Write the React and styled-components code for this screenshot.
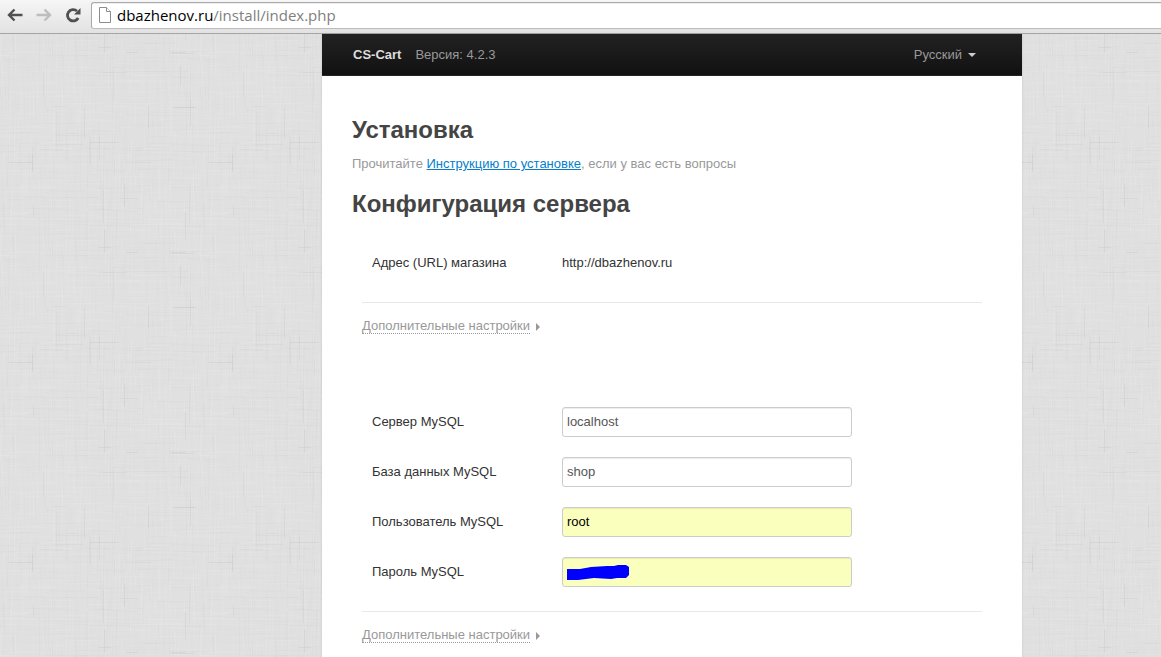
import React from "react";
import styled, { createGlobalStyle } from "styled-components";

// Woven linen tile: seeded so that the threads are the same on each load.
const TILE = 200;
function linenTile() {
  let seed = 42;
  const rnd = () => {
    seed = (seed * 1664525 + 1013904223) % 4294967296;
    return seed / 4294967296;
  };
  let out = "";
  // A thread that leaves the tile comes in again at the opposite edge.
  const thread = (across, x, y, len, fill, alpha) => {
    const size = across ? `width='${len}' height='1'` : `width='1' height='${len}'`;
    const paint = `${size} fill='${fill}' fill-opacity='${alpha.toFixed(3)}'`;
    out += `<rect x='${x}' y='${y}' ${paint}/>`;
    if ((across ? x : y) + len > TILE) {
      out += `<rect x='${across ? x - TILE : x}' y='${across ? y : y - TILE}' ${paint}/>`;
    }
  };
  const spot = () => Math.floor(rnd() * TILE);
  for (let i = 0; i < 1100; i += 1) {
    const light = rnd() < 0.5;
    const alpha = light ? 0.03 + rnd() * 0.05 : 0.002 + rnd() * 0.009;
    thread(rnd() < 0.5, spot(), spot(), 8 + Math.floor(rnd() * 40), light ? "white" : "black", alpha);
  }
  for (let i = 0; i < 36; i += 1) {
    thread(rnd() < 0.5, spot(), spot(), 12 + Math.floor(rnd() * 22), "black", 0.02 + rnd() * 0.025);
  }
  const svg = `<svg xmlns='http://www.w3.org/2000/svg' width='${TILE}' height='${TILE}'><rect width='${TILE}' height='${TILE}' fill='#e0e0e0'/>${out}</svg>`;
  return `url("data:image/svg+xml,${encodeURIComponent(svg).replace(/'/g, "%27")}")`;
}
const LINEN = linenTile();

const GlobalStyle = createGlobalStyle`
  *, *::before, *::after { box-sizing: border-box; }
  body {
    margin: 0;
    color: #333;
    font: 13px/20px "Liberation Sans", Arial, sans-serif;
  }
`;

const Window = styled.div`
  display: flex;
  flex-direction: column;
  min-height: 100vh;
`;

const Toolbar = styled.header`
  display: flex;
  height: 34px;
  padding: 2px 0 4px 6px;
  border-bottom: 1px solid #a5a5a5;
  background: linear-gradient(#f6f6f6, #e2e2e2);
`;

const ToolButton = styled.button`
  display: flex;
  align-items: center;
  justify-content: center;
  width: 29px;
  margin: 0;
  padding: 0 12px 2px 0;
  border: 0;
  background: none;
  color: ${(p) => (p.disabled ? "#bdbdbd" : "#505050")};
  svg { flex: none; }
`;

const AddressBar = styled.div`
  display: flex;
  flex: 1;
  align-items: center;
  gap: 6px;
  min-width: 0;
  margin-left: -2px;
  padding: 0 0 2px 7px;
  border: 1px solid #a9a9a9;
  border-right: 0;
  border-bottom-color: #bcbcbc;
  border-radius: 3px 0 0 3px;
  background: #fff;
  box-shadow: inset 0 1px #eee;
  color: #808080;
  font: 15px/22px "Open Sans", "Noto Sans", sans-serif;
  white-space: nowrap;
`;

const Host = styled.span`
  color: #000;
`;

const Desktop = styled.div`
  display: grid;
  flex: 1;
  grid-template-columns: minmax(0, 322fr) minmax(0, 700px) minmax(0, 139fr);
  background: #e2e2e2 ${LINEN} -28px 0;
`;

const Page = styled.div`
  grid-column: 2;
  background: #fff;
  box-shadow: 0 0 2px rgba(0, 0, 0, 0.12);
`;

const Navbar = styled.nav`
  display: flex;
  align-items: center;
  gap: 14px;
  height: 42px;
  padding: 0 46px 0 31px;
  border-bottom: 1px solid #252525;
  background: linear-gradient(#222, #111);
  color: #999;
`;

const Brand = styled.a`
  color: #ddd;
  font-weight: bold;
  text-decoration: none;
`;

const LanguageButton = styled.button`
  display: flex;
  align-items: center;
  gap: 6px;
  margin: 0 0 0 auto;
  padding: 0;
  border: 0;
  background: none;
  color: #999;
  font: inherit;
  &::after {
    content: "";
    border: 4px solid transparent;
    border-top-color: #ccc;
    border-bottom: 0;
  }
`;

const Content = styled.main`
  padding: 34px 40px 12px 30px;
`;

const Title = styled.h1`
  margin: 0;
  color: #444;
  font-size: 24px;
  line-height: 40px;
`;

const Hint = styled.p`
  margin: 4px 0 10px;
  color: #999;
`;

const HintLink = styled.a`
  color: #0780cc;
  text-decoration: underline;
`;

const Section = styled.section`
  display: flex;
  flex-direction: column;
  gap: 20px;
  margin-left: 10px;
  padding: ${(p) => p.$top}px 0 ${(p) => p.$bottom}px 10px;
`;

const Row = styled.div`
  display: grid;
  grid-template-columns: 190px minmax(0, 290px);
  align-items: center;
`;

const Field = styled.div`
  position: relative;
`;

const TextInput = styled.input`
  display: block;
  width: 100%;
  height: 30px;
  padding: 3px 4px 5px;
  border: 1px solid #ccc;
  border-radius: 3px;
  background: ${(p) => (p.$filled ? "#faffbd" : "#fff")};
  box-shadow: inset 0 1px 1px rgba(0, 0, 0, 0.075);
  color: ${(p) => (p.$filled ? "#000" : "#555")};
  font: inherit;
`;

const Scribble = styled.svg`
  position: absolute;
  top: 8px;
  left: 5px;
  pointer-events: none;
`;

const More = styled.div`
  margin-left: 10px;
  padding-top: 13px;
  border-top: 1px solid #e8e8e8;
`;

const MoreButton = styled.button`
  display: flex;
  align-items: center;
  gap: 6px;
  height: 20px;
  margin: 0;
  padding: 0;
  border: 0;
  background: none;
  color: #999;
  font: inherit;
  &::after {
    content: "";
    margin-top: 2px;
    border: 4px solid transparent;
    border-left-color: #999;
    border-right: 0;
  }
`;

const Dotted = styled.span`
  border-bottom: 1px dotted #999;
  line-height: 15px;
`;

const BackIcon = () => (
  <svg width="18" height="16" viewBox="0 0 18 16" fill="none" stroke="currentColor" strokeWidth="2.4" aria-hidden="true">
    <path d="M16.5 8H3M8.5 2.5 3 8l5.5 5.5" />
  </svg>
);

const ForwardIcon = () => (
  <svg width="18" height="16" viewBox="0 0 18 16" fill="none" stroke="currentColor" strokeWidth="2.4" aria-hidden="true">
    <path d="M1.5 8H15M9.5 2.5 15 8l-5.5 5.5" />
  </svg>
);

const ReloadIcon = () => (
  <svg width="16" height="16" viewBox="0 0 16 16" aria-hidden="true">
    <path d="M13.2 11A5.7 5.7 0 1 1 12 4" fill="none" stroke="currentColor" strokeWidth="2.8" />
    <path d="M15.5 1v6.5H9z" fill="currentColor" />
  </svg>
);

const PageIcon = () => (
  <svg width="12" height="16" viewBox="0 0 12 16" fill="#fff" stroke="#8c8c8c" aria-hidden="true">
    <path d="M.5.5h7l4 4v11H.5z" />
    <path d="M7.5.5v4h4" />
  </svg>
);

const FIELDS = [
  { id: "host", label: "Сервер MySQL", value: "localhost" },
  { id: "name", label: "База данных MySQL", value: "shop" },
  { id: "user", label: "Пользователь MySQL", value: "root", filled: true },
  { id: "password", label: "Пароль MySQL", value: "", type: "password", filled: true },
];

const MoreSettings = () => (
  <More>
    <MoreButton type="button" aria-expanded="false">
      <Dotted>Дополнительные настройки</Dotted>
    </MoreButton>
  </More>
);

export default function App() {
  return (
    <Window>
      <GlobalStyle />
      <Toolbar>
        <ToolButton type="button" aria-label="Назад"><BackIcon /></ToolButton>
        <ToolButton type="button" aria-label="Вперёд" disabled><ForwardIcon /></ToolButton>
        <ToolButton type="button" aria-label="Обновить"><ReloadIcon /></ToolButton>
        <AddressBar>
          <PageIcon />
          <div><Host>dbazhenov.ru</Host>/install/index.php</div>
        </AddressBar>
      </Toolbar>
      <Desktop>
        <Page>
          <Navbar>
            <Brand href="#">CS-Cart</Brand>
            <span>Версия: 4.2.3</span>
            <LanguageButton type="button" aria-haspopup="true">Русский</LanguageButton>
          </Navbar>
          <Content>
            <Title>Установка</Title>
            <Hint>
              Прочитайте <HintLink href="#">Инструкцию по установке</HintLink>, если у вас есть вопросы
            </Hint>
            <Title as="h2">Конфигурация сервера</Title>
            <Section $top={29} $bottom={29}>
              <Row>
                <span>Адрес (URL) магазина</span>
                <span>http://dbazhenov.ru</span>
              </Row>
            </Section>
            <MoreSettings />
            <Section $top={71} $bottom={24}>
              {FIELDS.map((f) => (
                <Row key={f.id}>
                  <label htmlFor={f.id}>{f.label}</label>
                  <Field>
                    <TextInput id={f.id} type={f.type || "text"} defaultValue={f.value} $filled={f.filled} />
                    {f.type === "password" && (
                      <Scribble width="62" height="16" viewBox="0 0 62 16" aria-hidden="true">
                        <path d="M0 4h13L24 2l16-1h7l4-1h8l3 2v8l-3 3H50l-6 1-17-1-8 1-8 1H0z" fill="#00f" />
                      </Scribble>
                    )}
                  </Field>
                </Row>
              ))}
            </Section>
            <MoreSettings />
          </Content>
        </Page>
      </Desktop>
    </Window>
  );
}
